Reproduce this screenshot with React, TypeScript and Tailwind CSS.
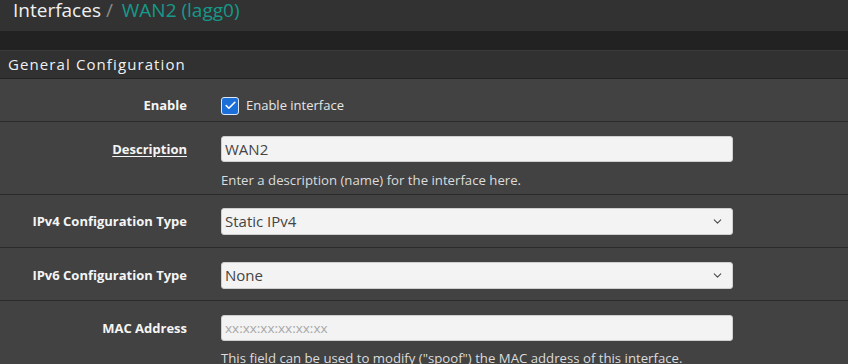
import { Check, ChevronDown } from 'lucide-react';

const font = { fontFamily: '"Open Sans", "Noto Sans", sans-serif' };

function Label({ children, underline }: { children: string; underline?: boolean }) {
  return (
    <div className="w-[187px] shrink-0 text-right text-[13px] font-bold text-[#f5f5f5]">
      <span className={underline ? 'underline underline-offset-2' : ''}>{children}</span>
    </div>
  );
}

function Select({ value }: { value: string }) {
  return (
    <div className="flex h-[27px] w-[512px] items-center justify-between rounded-[3px] border border-[#cfcfcf] bg-[#f3f3f3] pl-[3px] pr-[8px] text-[15px] text-[#444]">
      <span>{value}</span>
      <ChevronDown size={13} strokeWidth={2} className="text-[#4a4a4a]" />
    </div>
  );
}

export default function App() {
  return (
    <div className="w-[848px] h-[364px] overflow-hidden bg-[#424242]" style={font}>
      {/* breadcrumb */}
      <div className="h-[31px] bg-[#323232] pl-[13px] flex items-start">
        <h1 className="text-[19px] leading-[20px] text-[#f0f0f0]">
          Interfaces <span className="text-[#8a8a8a]">/</span>{' '}
          <span className="ml-[4px] text-[#16998a]">WAN2 (lagg0)</span>
        </h1>
      </div>
      <div className="h-[19px] bg-[#222]" />

      {/* panel */}
      <div className="border-t border-[#3b3b3b]">
        <div className="h-[28px] bg-[#313131] pl-[8px] flex items-center text-[15px] tracking-[1.1px] text-[#f0f0f0] border-b border-[#232323]">
          General Configuration
        </div>

        {/* Enable */}
        <div className="flex items-start pt-[17px] h-[43px] border-b border-[#2b2b2b]">
          <Label>Enable</Label>
          <div className="ml-[34px] flex items-center gap-[7px] text-[13px] text-[#e6e6e6]">
            <span className="flex h-[18px] w-[18px] items-center justify-center rounded-[3px] border border-[#dfe8f5] bg-[#1a6fd8]">
              <Check size={13} strokeWidth={3} className="text-white" />
            </span>
            Enable interface
          </div>
        </div>

        {/* Description */}
        <div className="flex items-start pt-[14px] h-[73px] border-b border-[#2b2b2b]">
          <div className="pt-[4px]">
            <Label underline>Description</Label>
          </div>
          <div className="ml-[34px]">
            <div className="flex h-[26px] w-[512px] items-center rounded-[3px] border border-[#cfcfcf] bg-[#f3f3f3] pl-[3px] text-[15px] text-[#444]">
              WAN2
            </div>
            <p className="mt-[9px] text-[13.2px] text-[#dcdcdc]">Enter a description (name) for the interface here.</p>
          </div>
        </div>

        {/* IPv4 */}
        <div className="flex items-start pt-[13px] h-[53px] border-b border-[#2b2b2b]">
          <div className="pt-[4px]">
            <Label>IPv4 Configuration Type</Label>
          </div>
          <div className="ml-[34px]">
            <Select value="Static IPv4" />
          </div>
        </div>

        {/* IPv6 */}
        <div className="flex items-start pt-[14px] h-[53px] border-b border-[#2b2b2b]">
          <div className="pt-[4px]">
            <Label>IPv6 Configuration Type</Label>
          </div>
          <div className="ml-[34px]">
            <Select value="None" />
          </div>
        </div>

        {/* MAC */}
        <div className="flex items-start pt-[14px]">
          <div className="pt-[4px]">
            <Label>MAC Address</Label>
          </div>
          <div className="ml-[34px]">
            <div className="flex h-[26px] w-[512px] items-center rounded-[3px] border border-[#cfcfcf] bg-[#f3f3f3] pl-[3px] text-[13.5px] text-[#a8a8a8]">
              xx:xx:xx:xx:xx:xx
            </div>
            <p className="mt-[8px] text-[13.2px] text-[#dcdcdc]">
              This field can be used to modify ("spoof") the MAC address of this interface.
            </p>
          </div>
        </div>
      </div>
    </div>
  );
}
